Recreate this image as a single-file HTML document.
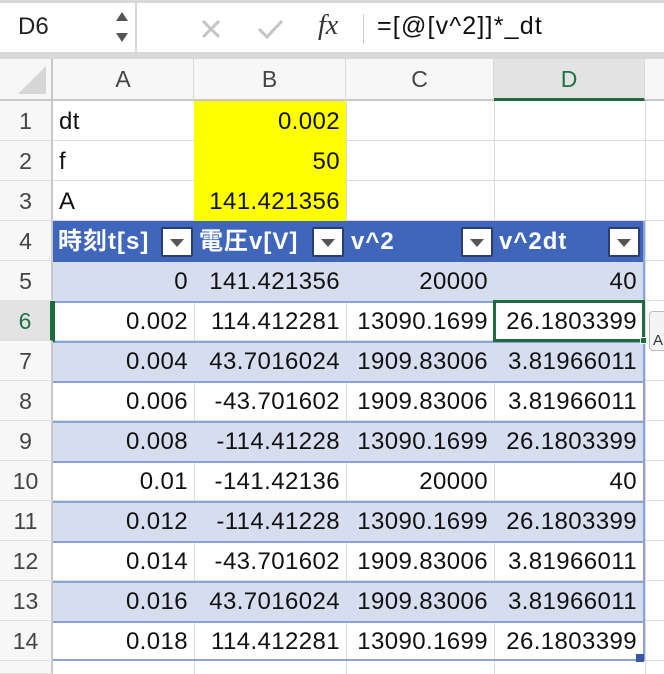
<!DOCTYPE html>
<html style="width:664px;height:674px;overflow:hidden"><head><meta charset="utf-8"><style>
*{margin:0;padding:0;box-sizing:border-box}
body{width:664px;height:674px;overflow:hidden;background:#fff;font-family:"Liberation Sans","Noto Sans CJK JP",sans-serif;position:relative}
.a{position:absolute}
.c{position:absolute;height:40px;line-height:40px;font-size:24px;letter-spacing:0.4px;color:#111;white-space:nowrap;overflow:hidden}
.r{text-align:right;padding-right:6px}
.l{padding-left:6px}
.rh{position:absolute;left:0;width:53px;height:40px;line-height:40px;text-align:center;font-size:23px;color:#444;background:#f7f7f7;border-right:2px solid #c8c8c8;border-bottom:1px solid #e0e0e0}
.ch{position:absolute;top:59px;height:42px;line-height:40px;text-align:center;font-size:23px;color:#444;background:#f7f7f7;border-right:1px solid #dadada;border-bottom:2px solid #c8c8c8}
.dd{position:absolute;top:6px;width:32px;height:30px;background:#fff;border:2px solid #2a3f6e;border-radius:2px}
.dd:after{content:"";position:absolute;left:7px;top:10px;border-left:7px solid transparent;border-right:7px solid transparent;border-top:8px solid #555}
.h{color:#fff;font-weight:bold;font-size:24px;letter-spacing:1px}
</style></head><body>
<div class="a" style="left:0;top:0;width:664px;height:59px;background:#d8d8d8"></div>
<div class="a" style="left:0;top:3px;width:135px;height:49px;background:#fff"></div>
<div class="a" style="left:137px;top:3px;width:527px;height:49px;background:#fff"></div>
<div class="a" style="left:18px;top:13px;font-size:24px;color:#222">D6</div>
<div class="a" style="left:116px;top:12px;border-left:6px solid transparent;border-right:6px solid transparent;border-bottom:9px solid #555"></div>
<div class="a" style="left:116px;top:33px;border-left:6px solid transparent;border-right:6px solid transparent;border-top:9px solid #555"></div>
<svg class="a" style="left:200px;top:18px" width="22" height="22"><path d="M3 3L19 19M19 3L3 19" stroke="#c4c4c4" stroke-width="3"/></svg>
<svg class="a" style="left:256px;top:17px" width="30" height="24"><path d="M3 12L11 20L26 4" stroke="#c4c4c4" stroke-width="3" fill="none"/></svg>
<div class="a" style="left:318px;top:10px;font-family:'Liberation Serif',serif;font-style:italic;font-size:28px;color:#333">fx</div>
<div class="a" style="left:363px;top:14px;width:1px;height:30px;background:#ccc"></div>
<div class="a" style="left:377px;top:12px;font-size:25px;letter-spacing:1.2px;color:#111">=[@[v^2]]*_dt</div>
<div class="a" style="left:0;top:59px;width:664px;height:615px;background:#fff"></div>
<div class="ch" style="left:0;width:53px;border-right:2px solid #c8c8c8"></div>
<div class="a" style="left:18px;top:66px;border-left:28px solid transparent;border-bottom:28px solid #d6d6d6"></div>
<div class="ch" style="left:53px;width:141px">A</div>
<div class="ch" style="left:194px;width:152px">B</div>
<div class="ch" style="left:346px;width:148px">C</div>
<div class="ch" style="left:494px;width:151px;color:#217346;background:#e3e3e3;border-bottom:3px solid #1e6b3b">D</div>
<div class="ch" style="left:645px;width:30px"></div>
<div class="a" style="left:53px;top:101px;width:611px;height:573px;background:
repeating-linear-gradient(to bottom,transparent 0,transparent 39px,#dcdcdc 39px,#dcdcdc 40px)"></div>
<div class="a" style="left:194px;top:101px;width:1px;height:573px;background:#dcdcdc"></div>
<div class="a" style="left:346px;top:101px;width:1px;height:573px;background:#dcdcdc"></div>
<div class="a" style="left:494px;top:101px;width:1px;height:573px;background:#dcdcdc"></div>
<div class="a" style="left:645px;top:101px;width:1px;height:573px;background:#dcdcdc"></div>
<div class="a" style="left:194px;top:101px;width:152px;height:120px;background:#ffff00"></div>
<div class="a" style="left:53px;top:221px;width:592px;height:41px;background:#3f66bb"></div>
<div class="a" style="left:53px;top:262px;width:592px;height:40px;background:#d5ddee"></div>
<div class="a" style="left:53px;top:341px;width:592px;height:40px;background:#d5ddee"></div>
<div class="a" style="left:53px;top:421px;width:592px;height:40px;background:#d5ddee"></div>
<div class="a" style="left:53px;top:501px;width:592px;height:40px;background:#d5ddee"></div>
<div class="a" style="left:53px;top:581px;width:592px;height:40px;background:#d5ddee"></div>
<div class="a" style="left:53px;top:301px;width:592px;height:360px;background:repeating-linear-gradient(to bottom,#8aa3d8 0,#8aa3d8 2px,transparent 2px,transparent 40px)"></div>
<div class="a" style="left:53px;top:659px;width:592px;height:2px;background:#8aa3d8"></div>
<div class="a" style="left:643px;top:221px;width:2px;height:440px;background:#8aa3d8"></div>
<div class="a" style="left:636px;top:654px;width:8px;height:8px;background:#3a55a8"></div>
<div class="c h" style="left:58px;top:222px">時刻t[s]</div>
<div class="c h" style="left:199px;top:222px">電圧v[V]</div>
<div class="c h" style="left:351px;top:222px">v^2</div>
<div class="c h" style="left:499px;top:222px">v^2dt</div>
<div class="dd" style="left:161px;top:227px"></div>
<div class="dd" style="left:312px;top:227px"></div>
<div class="dd" style="left:461px;top:227px"></div>
<div class="dd" style="left:608px;top:227px"></div>
<div class="rh" style="top:101px">1</div><div class="rh" style="top:141px">2</div><div class="rh" style="top:181px">3</div><div class="rh" style="top:221px">4</div><div class="rh" style="top:261px">5</div><div class="rh" style="top:301px;color:#217346;background:#e3e3e3;border-right:3px solid #1e6b3b">6</div><div class="rh" style="top:341px">7</div><div class="rh" style="top:381px">8</div><div class="rh" style="top:421px">9</div><div class="rh" style="top:461px">10</div><div class="rh" style="top:501px">11</div><div class="rh" style="top:541px">12</div><div class="rh" style="top:581px">13</div><div class="rh" style="top:621px">14</div><div class="rh" style="top:661px;height:13px"></div>
<div class="c l" style="left:53px;top:102px">dt</div><div class="c r" style="left:194px;width:152px;top:102px">0.002</div>
<div class="c l" style="left:53px;top:142px">f</div><div class="c r" style="left:194px;width:152px;top:142px">50</div>
<div class="c l" style="left:53px;top:182px">A</div><div class="c r" style="left:194px;width:152px;top:182px">141.421356</div>
<div class="c r" style="left:53px;width:141px;top:262px">0</div><div class="c r" style="left:194px;width:152px;top:262px">141.421356</div><div class="c r" style="left:346px;width:148px;top:262px">20000</div><div class="c r" style="left:494px;width:149px;top:262px">40</div>
<div class="c r" style="left:53px;width:141px;top:302px">0.002</div><div class="c r" style="left:194px;width:152px;top:302px">114.412281</div><div class="c r" style="left:346px;width:148px;top:302px">13090.1699</div><div class="c r" style="left:494px;width:149px;top:302px">26.1803399</div>
<div class="c r" style="left:53px;width:141px;top:342px">0.004</div><div class="c r" style="left:194px;width:152px;top:342px">43.7016024</div><div class="c r" style="left:346px;width:148px;top:342px">1909.83006</div><div class="c r" style="left:494px;width:149px;top:342px">3.81966011</div>
<div class="c r" style="left:53px;width:141px;top:382px">0.006</div><div class="c r" style="left:194px;width:152px;top:382px">-43.701602</div><div class="c r" style="left:346px;width:148px;top:382px">1909.83006</div><div class="c r" style="left:494px;width:149px;top:382px">3.81966011</div>
<div class="c r" style="left:53px;width:141px;top:422px">0.008</div><div class="c r" style="left:194px;width:152px;top:422px">-114.41228</div><div class="c r" style="left:346px;width:148px;top:422px">13090.1699</div><div class="c r" style="left:494px;width:149px;top:422px">26.1803399</div>
<div class="c r" style="left:53px;width:141px;top:462px">0.01</div><div class="c r" style="left:194px;width:152px;top:462px">-141.42136</div><div class="c r" style="left:346px;width:148px;top:462px">20000</div><div class="c r" style="left:494px;width:149px;top:462px">40</div>
<div class="c r" style="left:53px;width:141px;top:502px">0.012</div><div class="c r" style="left:194px;width:152px;top:502px">-114.41228</div><div class="c r" style="left:346px;width:148px;top:502px">13090.1699</div><div class="c r" style="left:494px;width:149px;top:502px">26.1803399</div>
<div class="c r" style="left:53px;width:141px;top:542px">0.014</div><div class="c r" style="left:194px;width:152px;top:542px">-43.701602</div><div class="c r" style="left:346px;width:148px;top:542px">1909.83006</div><div class="c r" style="left:494px;width:149px;top:542px">3.81966011</div>
<div class="c r" style="left:53px;width:141px;top:582px">0.016</div><div class="c r" style="left:194px;width:152px;top:582px">43.7016024</div><div class="c r" style="left:346px;width:148px;top:582px">1909.83006</div><div class="c r" style="left:494px;width:149px;top:582px">3.81966011</div>
<div class="c r" style="left:53px;width:141px;top:622px">0.018</div><div class="c r" style="left:194px;width:152px;top:622px">114.412281</div><div class="c r" style="left:346px;width:148px;top:622px">13090.1699</div><div class="c r" style="left:494px;width:149px;top:622px">26.1803399</div>
<div class="a" style="left:53px;top:301px;width:2px;height:41px;background:#1e6b3b"></div>
<div class="a" style="left:493px;top:300px;width:152px;height:42px;border:3px solid #1e6b3b"></div>
<div class="a" style="left:640px;top:337px;width:7px;height:7px;background:#1e6b3b;border:1px solid #fff"></div>
<div class="a" style="left:649px;top:311px;width:20px;height:40px;background:#f4f4f4;border:1px solid #bbb;border-radius:4px;font-size:15px;line-height:58px;padding-left:3px;color:#333">A</div>
</body></html>
